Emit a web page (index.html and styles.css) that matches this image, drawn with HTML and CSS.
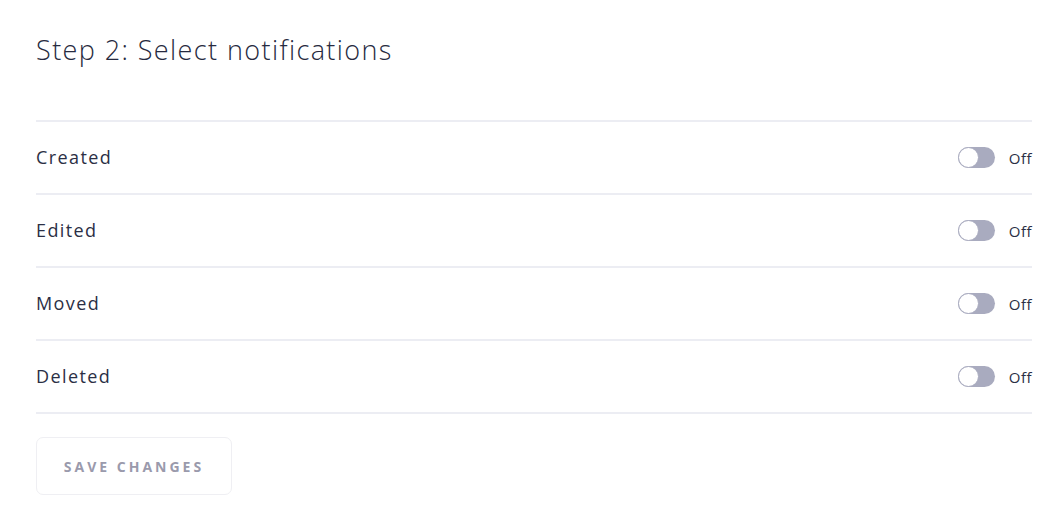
FILE: index.html
```html
<!DOCTYPE html>
<html lang="en">
<head>
<meta charset="UTF-8">
<title>Select notifications</title>
<link rel="stylesheet" href="styles.css">
</head>
<body>

<div class="container">
    <h1>Step 2: Select notifications</h1>

    <div class="notify-list">
        <div class="notify-row">
            <span class="notify-label">Created</span>
            <label class="switch">
                <span class="track"><span class="knob"></span></span>
                <span class="switch-text">Off</span>
            </label>
        </div>
        <div class="notify-row">
            <span class="notify-label">Edited</span>
            <label class="switch">
                <span class="track"><span class="knob"></span></span>
                <span class="switch-text">Off</span>
            </label>
        </div>
        <div class="notify-row">
            <span class="notify-label">Moved</span>
            <label class="switch">
                <span class="track"><span class="knob"></span></span>
                <span class="switch-text">Off</span>
            </label>
        </div>
        <div class="notify-row">
            <span class="notify-label">Deleted</span>
            <label class="switch">
                <span class="track"><span class="knob"></span></span>
                <span class="switch-text">Off</span>
            </label>
        </div>
    </div>

    <button class="save-btn">Save changes</button>
</div>

</body>
</html>
```

FILE: styles.css
```css
body {
    font-family: "Open Sans", Arial, sans-serif;
    background-color: #fff;
    color: #2b2f45;
    margin: 0;
    padding: 0;
}

.container {
    padding: 28px 30px 20px 36px;
}

h1 {
    font-size: 27px;
    font-weight: 300;
    letter-spacing: 1.4px;
    margin: 0 0 48px 0;
    line-height: 44px;
    color: #262a40;
}

.notify-list {
    border-top: 2px solid #ecedf3;
}

.notify-row {
    display: flex;
    align-items: center;
    justify-content: space-between;
    height: 71px;
    border-bottom: 2px solid #ecedf3;
}

.notify-label {
    font-size: 18px;
    font-weight: 400;
    letter-spacing: 1.4px;
    line-height: 22px;
    margin-top: -2px;
}

.switch {
    display: flex;
    align-items: center;
    gap: 14px;
}

.track {
    display: block;
    width: 37px;
    height: 21px;
    border-radius: 11px;
    background-color: #a9abbf;
    position: relative;
}

.knob {
    position: absolute;
    left: 0;
    top: 0;
    width: 19px;
    height: 19px;
    border-radius: 50%;
    background-color: #fff;
    border: 1px solid #a9abbf;
}

.switch-text {
    font-size: 15px;
    letter-spacing: 0.5px;
    color: #2b2f45;
}

.save-btn {
    margin-top: 23px;
    width: 196px;
    height: 58px;
    background-color: #fff;
    border: 1px solid #efeff3;
    border-radius: 7px;
    font-family: "Open Sans", Arial, sans-serif;
    font-size: 14px;
    font-weight: 700;
    letter-spacing: 3px;
    text-transform: uppercase;
    color: #9a9aac;
}
```
